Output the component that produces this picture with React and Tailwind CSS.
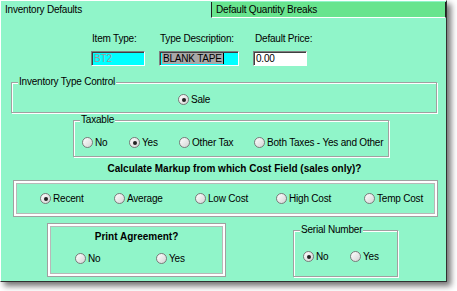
import React from "react";

const BG = "bg-[#90f5c9]";

const Radio = ({ label, checked, className = "" }) => (
  <div className={`flex items-center whitespace-nowrap ${className}`}>
    <span className="w-[11px] h-[11px] rounded-full border border-[#7a7a7a] bg-gradient-to-br from-white to-[#d4d4d4] flex items-center justify-center shrink-0">
      {checked && <span className="w-[4px] h-[4px] rounded-full bg-[#222]" />}
    </span>
    <span className="ml-[2px] leading-none">{label}</span>
  </div>
);

const GroupBox = ({ title, className = "", children }) => (
  <div
    className={`relative border border-[#a0a0a0] shadow-[inset_1px_1px_0_#fff,1px_1px_0_#fff] ${className}`}
  >
    <span className={`absolute -top-[6px] left-[6px] px-[1px] leading-none whitespace-nowrap ${BG}`}>
      {title}
    </span>
    {children}
  </div>
);

const Panel3D = ({ className = "", children }) => (
  <div
    className={`border border-[#a0a0a0] shadow-[inset_0_0_0_2px_#fff,inset_0_0_0_3px_#b8b8b8] ${className}`}
  >
    {children}
  </div>
);

const sunken =
  "h-[15px] border border-t-[#808080] border-l-[#808080] border-b-white border-r-white shadow-[inset_1px_1px_0_#404040] flex items-center pl-[2px] leading-none whitespace-nowrap";

export default function App() {
  return (
    <div className="w-[457px] h-[291px] bg-white font-['Liberation_Sans',Arial,sans-serif] text-[10px] tracking-[-0.2px] text-black">
      <div
        className={`w-[447px] h-[282px] ${BG} border-r border-b border-[#303030] shadow-[4px_4px_6px_rgba(0,0,0,0.55)] flex flex-col border-t border-l border-t-white border-l-white`}
      >
        {/* tabs */}
        <div className="flex h-[17px] shrink-0">
          <div className="w-[210px] pl-[4px] pt-[4px] leading-none whitespace-nowrap">Inventory Defaults</div>
          <div className="flex-1 mt-[1px] bg-[#68e48e] border-l border-r border-[#202020] border-b border-b-white pl-[4px] pt-[3px] leading-none whitespace-nowrap">
            Default Quantity Breaks
          </div>
        </div>

        {/* fields */}
        <div className="flex mt-[16px] ml-[90px]">
          <div className="w-[54px] flex flex-col">
            <span className="pl-[1px] leading-none whitespace-nowrap">Item Type:</span>
            <div className={`${sunken} mt-[7px] bg-[#00ffff] text-[#9a9a9a]`}>BT2</div>
          </div>
          <div className="w-[80px] ml-[14px] flex flex-col">
            <span className="pl-[1px] leading-none whitespace-nowrap">Type Description:</span>
            <div className={`${sunken} mt-[7px] bg-[#00ffff]`}>
              <span className="bg-[#a8a8a8] leading-[11px] px-[1px]">BLANK TAPE</span>
              <span className="w-[1px] h-[11px] bg-black" />
            </div>
          </div>
          <div className="w-[54px] ml-[14px] flex flex-col">
            <span className="pl-[2px] leading-none whitespace-nowrap">Default Price:</span>
            <div className={`${sunken} mt-[7px] bg-white`}>0.00</div>
          </div>
        </div>

        {/* inventory type control */}
        <GroupBox title="Inventory Type Control" className="mt-[16px] ml-[10px] w-[426px] h-[31px]">
          <Radio label="Sale" checked className="ml-[166px] mt-[11px]" />
        </GroupBox>

        {/* taxable */}
        <GroupBox title="Taxable" className="mt-[7px] ml-[72px] w-[316px] h-[37px]">
          <div className="flex mt-[16px] ml-[8px]">
            <Radio label="No" className="w-[47px]" />
            <Radio label="Yes" checked className="w-[50px]" />
            <Radio label="Other Tax" className="w-[75px]" />
            <Radio label="Both Taxes - Yes and Other" />
          </div>
        </GroupBox>

        <div className="mt-[7px] text-center font-bold leading-none pl-[22px] tracking-normal whitespace-nowrap">
          Calculate Markup from which Cost Field (sales only)?
        </div>

        {/* markup */}
        <Panel3D className="mt-[6px] ml-[12px] w-[425px] h-[37px] flex items-center">
          <div className="flex ml-[26px]">
            <Radio label="Recent" checked className="w-[74px]" />
            <Radio label="Average" className="w-[81px]" />
            <Radio label="Low Cost" className="w-[81px]" />
            <Radio label="High Cost" className="w-[88px]" />
            <Radio label="Temp Cost" />
          </div>
        </Panel3D>

        {/* bottom row */}
        <div className="flex mt-[6px]">
          <Panel3D className="ml-[46px] w-[179px] h-[54px] flex flex-col">
            <div className="text-center font-bold leading-none mt-[8px] tracking-normal whitespace-nowrap">Print Agreement?</div>
            <div className="flex mt-[11px] ml-[27px]">
              <Radio label="No" className="w-[81px]" />
              <Radio label="Yes" />
            </div>
          </Panel3D>
          <GroupBox title="Serial Number" className="mt-[7px] ml-[67px] w-[105px] h-[47px]">
            <div className="flex mt-[20px] ml-[9px]">
              <Radio label="No" checked className="w-[47px]" />
              <Radio label="Yes" />
            </div>
          </GroupBox>
        </div>
      </div>
    </div>
  );
}
